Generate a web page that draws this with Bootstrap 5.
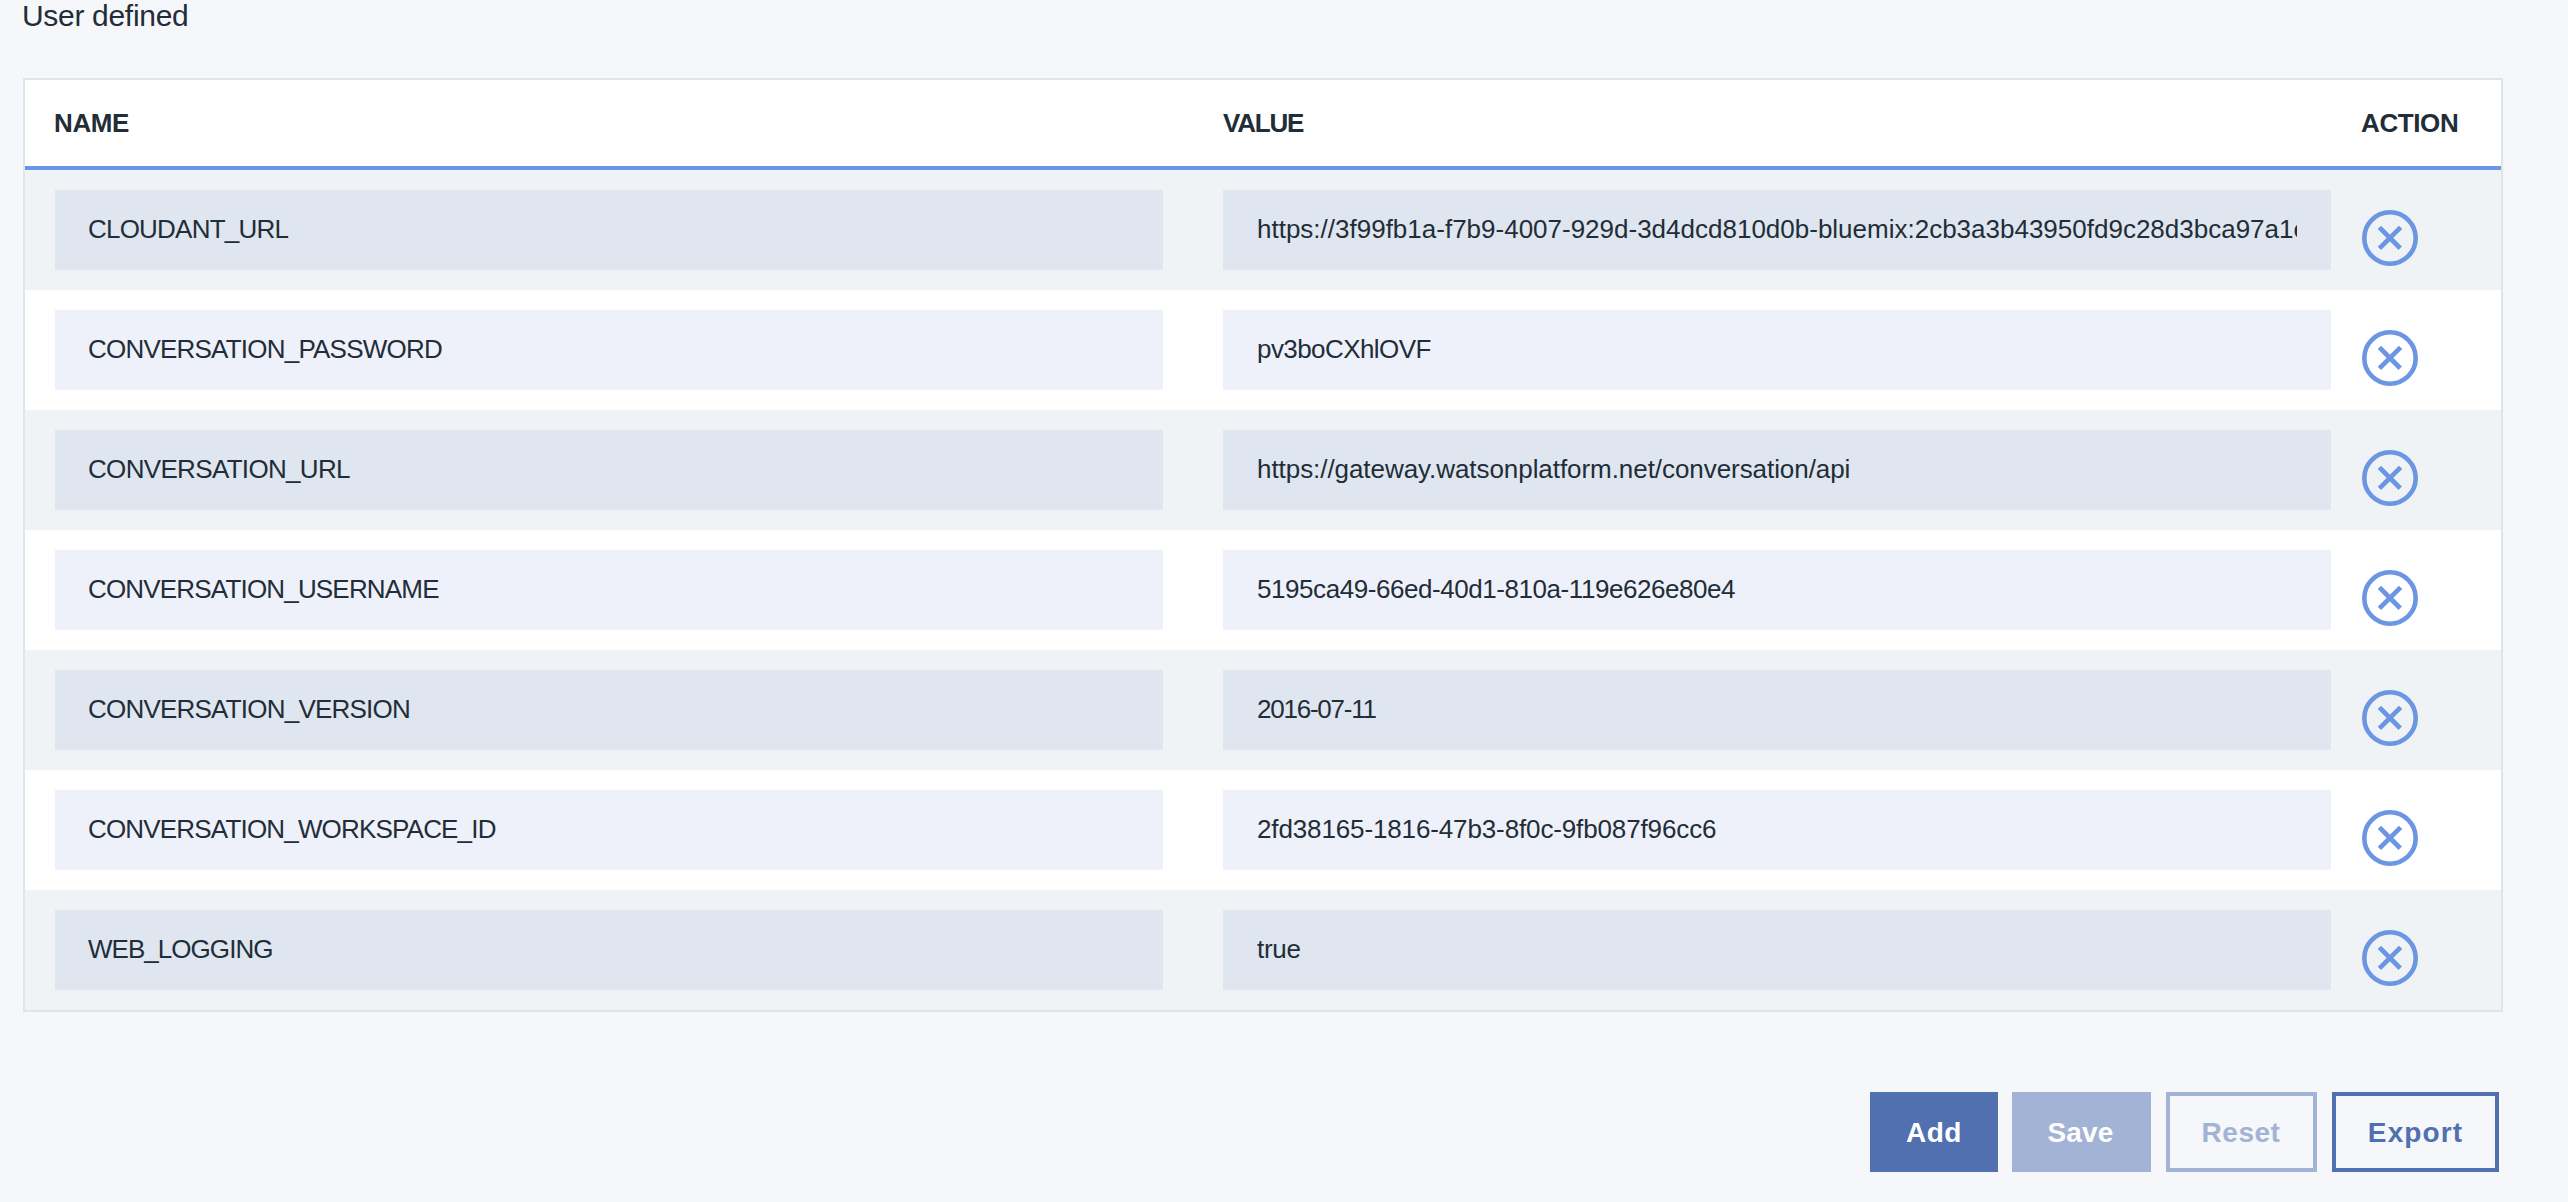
<!DOCTYPE html>
<html lang="en">
<head>
<meta charset="utf-8">
<meta name="viewport" content="width=device-width, initial-scale=1">
<title>Environment variables</title>
<link href="https://cdn.jsdelivr.net/npm/bootstrap@5.3.0/dist/css/bootstrap.min.css" rel="stylesheet">
<style>
  body { background: #f5f7fb; color: #222d37; font-family: "Liberation Sans", Arial, sans-serif; overflow: hidden; }
  .env-page { padding: 0 65px 0 23px; }
  .env-title { font-size: 30px; line-height: 34px; margin: -1px 0 45px 0; font-weight: 400; letter-spacing: -.31px; text-indent: -1px; }
  .env-frame { border: 2px solid #dfe5ea; }
  .env-table { table-layout: fixed; border-collapse: separate; border-spacing: 0; --bs-table-bg: #fff; --bs-table-color: #222d37; }
  .env-table > :not(caption) > * > * { padding: 0 30px; border: 0; }
  .env-table > :not(caption) > * > .env-act { padding: 0; }
  .env-table > thead > tr > th { height: 90px; font-size: 26px; line-height: 30px; letter-spacing: -.4px; border-bottom: 4px solid #6c96e4 !important; vertical-align: middle; }
  .env-table > thead > tr > th:first-child { text-indent: -1px; }
  .env-table > tbody > tr > td { height: 120px; vertical-align: middle; }
  .env-table > tbody > tr:nth-child(odd) > td { background: #eff3f6; }
  .env-input { height: 80px; font-size: 26px; line-height: 30px; padding: 0 34px 2px; border: 0; border-radius: 0; background: #eef1fa; color: #222d37; }
  td:first-child .env-input { padding-left: 33px; }
  .env-input:focus { background: #eef1fa; box-shadow: none; }
  tr:nth-child(odd) .env-input { background: #dfe6ef; }
  .col-action { width: 140px; }
  .env-remove { padding: 16px 0 0 1px; border: 0; border-radius: 0; line-height: 0; background: none; }
  .env-actions { gap: 15px; padding-right: 4px; margin-top: 80px; }
  .env-btn { --bs-btn-disabled-opacity: 1; height: 80px; border-width: 4px; border-radius: 0; font-size: 28px; font-weight: 700; line-height: 32px; padding: 2px 0 0; letter-spacing: .5px; }
  .env-solid, .env-solid:hover { background: #5070b0; border-color: #5070b0; color: #fff; }
  .env-line, .env-line:hover { background: transparent; border-color: #5070b0; color: #5070b0; }
  .env-solid:disabled { background: #a3b3d5; border-color: #a3b3d5; color: #fff; }
  .env-line:disabled { border-color: #a3b3d5; color: #a3b3d5; }
  .w-add { width: 128px; margin-right: -1px; } .w-save { width: 139px; letter-spacing: .1px; padding-right: 2px; } .w-reset { width: 151px; padding-right: 1px; } .w-export { width: 167px; letter-spacing: 1.1px; }
  .t-value { letter-spacing: -1.2px !important; }
  .t0 { letter-spacing: 0; } .t1 { letter-spacing: -.06px; } .t2 { letter-spacing: -.13px; } .t3 { letter-spacing: -.28px; }
  .t4 { letter-spacing: -.44px; } .t5 { letter-spacing: -.57px; } .t6 { letter-spacing: -.67px; } .t7 { letter-spacing: -.78px; }
  .t8 { letter-spacing: -.82px; } .t9 { letter-spacing: -.96px; } .t10 { letter-spacing: -1.23px; }
</style>
</head>
<body>
<svg class="d-none" xmlns="http://www.w3.org/2000/svg">
  <symbol id="remove" viewBox="0 0 56 56">
    <circle cx="28" cy="28" r="25.7" fill="none" stroke="#6c96e4" stroke-width="4.6"/>
    <path d="M17.4 17.4 38.2 38.2M38.6 17.4 17.4 38.4" fill="none" stroke="#6c96e4" stroke-width="4.8"/>
  </symbol>
</svg>
<main class="env-page">
  <h2 class="env-title">User defined</h2>
  <div class="env-frame">
    <table class="table env-table mb-0">
      <colgroup><col><col><col class="col-action"></colgroup>
      <thead><tr><th>NAME</th><th class="t-value">VALUE</th><th class="env-act">ACTION</th></tr></thead>
      <tbody>
        <tr>
          <td><input class="form-control env-input t7" value="CLOUDANT_URL"></td>
          <td><input class="form-control env-input t0" value="https://3f99fb1a-f7b9-4007-929d-3d4dcd810d0b-bluemix:2cb3a3b43950fd9c28d3bca97a1e"></td>
          <td class="env-act"><button class="btn env-remove" aria-label="Remove"><svg width="56" height="56"><use href="#remove"/></svg></button></td>
        </tr>
        <tr>
          <td><input class="form-control env-input t7" value="CONVERSATION_PASSWORD"></td>
          <td><input class="form-control env-input t5" value="pv3boCXhlOVF"></td>
          <td class="env-act"><button class="btn env-remove" aria-label="Remove"><svg width="56" height="56"><use href="#remove"/></svg></button></td>
        </tr>
        <tr>
          <td><input class="form-control env-input t6" value="CONVERSATION_URL"></td>
          <td><input class="form-control env-input t1" value="https://gateway.watsonplatform.net/conversation/api"></td>
          <td class="env-act"><button class="btn env-remove" aria-label="Remove"><svg width="56" height="56"><use href="#remove"/></svg></button></td>
        </tr>
        <tr>
          <td><input class="form-control env-input t8" value="CONVERSATION_USERNAME"></td>
          <td><input class="form-control env-input t4" value="5195ca49-66ed-40d1-810a-119e626e80e4"></td>
          <td class="env-act"><button class="btn env-remove" aria-label="Remove"><svg width="56" height="56"><use href="#remove"/></svg></button></td>
        </tr>
        <tr>
          <td><input class="form-control env-input t7" value="CONVERSATION_VERSION"></td>
          <td><input class="form-control env-input t10" value="2016-07-11"></td>
          <td class="env-act"><button class="btn env-remove" aria-label="Remove"><svg width="56" height="56"><use href="#remove"/></svg></button></td>
        </tr>
        <tr>
          <td><input class="form-control env-input t8" value="CONVERSATION_WORKSPACE_ID"></td>
          <td><input class="form-control env-input t2" value="2fd38165-1816-47b3-8f0c-9fb087f96cc6"></td>
          <td class="env-act"><button class="btn env-remove" aria-label="Remove"><svg width="56" height="56"><use href="#remove"/></svg></button></td>
        </tr>
        <tr>
          <td><input class="form-control env-input t9" value="WEB_LOGGING"></td>
          <td><input class="form-control env-input t3" value="true"></td>
          <td class="env-act"><button class="btn env-remove" aria-label="Remove"><svg width="56" height="56"><use href="#remove"/></svg></button></td>
        </tr>
      </tbody>
    </table>
  </div>
  <div class="env-actions d-flex justify-content-end">
    <button class="btn env-btn env-solid w-add">Add</button>
    <button class="btn env-btn env-solid w-save" disabled>Save</button>
    <button class="btn env-btn env-line w-reset" disabled>Reset</button>
    <button class="btn env-btn env-line w-export">Export</button>
  </div>
</main>
<script src="https://cdn.jsdelivr.net/npm/bootstrap@5.3.0/dist/js/bootstrap.bundle.min.js"></script>
</body>
</html>
